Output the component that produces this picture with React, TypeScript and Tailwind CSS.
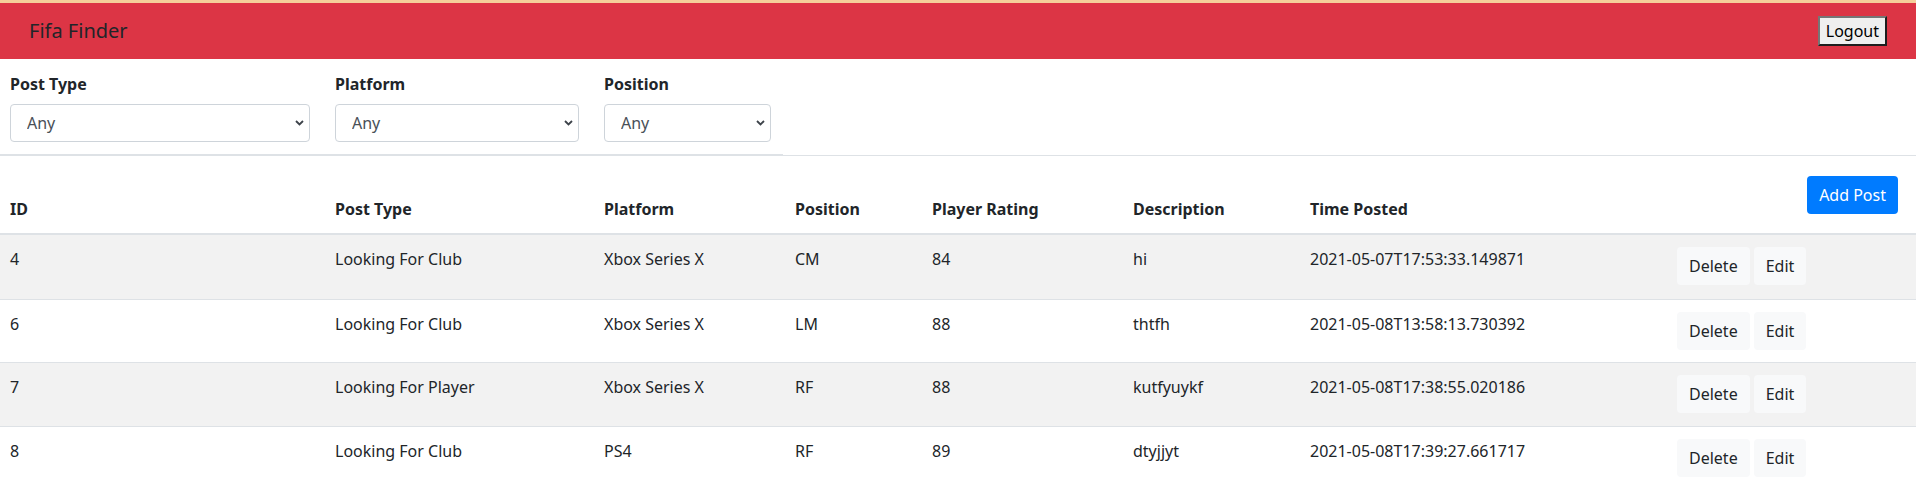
import { useState } from "react"

const posts = [
  { id: 4, type: "Looking For Club", platform: "Xbox Series X", position: "CM", rating: 84, desc: "hi", time: "2021-05-07T17:53:33.149871" },
  { id: 6, type: "Looking For Club", platform: "Xbox Series X", position: "LM", rating: 88, desc: "thtfh", time: "2021-05-08T13:58:13.730392" },
  { id: 7, type: "Looking For Player", platform: "Xbox Series X", position: "RF", rating: 88, desc: "kutfyuykf", time: "2021-05-08T17:38:55.020186" },
  { id: 8, type: "Looking For Club", platform: "PS4", position: "RF", rating: 89, desc: "dtyjjyt", time: "2021-05-08T17:39:27.661717" },
]

const cols = "grid grid-cols-[325px_269px_191px_137px_201px_177px_367px_1fr]"

function Filter({ label, width }: { label: string; width: string }) {
  const [value, setValue] = useState("Any")
  return (
    <div className="flex flex-col">
      <label className="font-bold leading-6 mb-2">{label}</label>
      <div className={`relative ${width}`}>
        <select
          value={value}
          onChange={(e) => setValue(e.target.value)}
          className="appearance-none w-full h-[38px] border border-[#ced4da] rounded-[4px] bg-white pl-4 text-[#495057] outline-none"
        >
          <option>Any</option>
        </select>
        <svg className="absolute right-[6px] top-[16px] pointer-events-none" width="9" height="6" viewBox="0 0 9 6">
          <path d="M1 1l3.5 3.5L8 1" stroke="#3d434a" strokeWidth="1.8" fill="none" />
        </svg>
      </div>
    </div>
  )
}

export default function App() {
  return (
    <div className="w-[1916px] bg-white text-[#212529] text-base" style={{ fontFamily: '"Noto Sans", sans-serif' }}>
      <div className="flex flex-row justify-between items-center h-[59px] bg-[#dc3545] border-t-[3px] border-[#f5cf9a] px-[29px]">
        <strong className="text-[20px] font-normal">Fifa Finder</strong>
        <button className="h-[30px] px-[6px] bg-[#efefef] text-black border-2 border-t-[#767676] border-l-[#767676] border-b-[#1e1e1e] border-r-[#1e1e1e]">Logout</button>
      </div>

      <div className="border-b border-[#dee2e6]">
        <div className="w-[783px] flex flex-row gap-[25px] pl-[10px] pt-[13px] pb-[12px] border-b-2 border-[#dee2e6] -mb-px">
          <Filter label="Post Type" width="w-[300px]" />
          <Filter label="Platform" width="w-[244px]" />
          <Filter label="Position" width="w-[167px]" />
        </div>
      </div>

      <div className={`${cols} h-[79px] border-b-2 border-[#dee2e6] font-bold`}>
        {["ID", "Post Type", "Platform", "Position", "Player Rating", "Description", "Time Posted"].map((h) => (
          <div key={h} className="flex items-end pl-[10px] pb-3 leading-6">{h}</div>
        ))}
        <div className="flex items-end justify-end pr-[18px] pb-[19px]">
          <button className="h-[38px] px-3 rounded-[4px] bg-[#007bff] text-white font-normal">Add Post</button>
        </div>
      </div>

      {posts.map((p, i) => (
        <div key={p.id} className={`${cols} h-[63.5px] ${i > 0 ? "border-t border-[#dee2e6]" : ""} ${i % 2 === 0 ? "bg-[#f2f2f2]" : "bg-white"}`}>
          {[p.id, p.type, p.platform, p.position, p.rating, p.desc, p.time].map((v, j) => (
            <div key={j} className="pl-[10px] pt-3 leading-6">{v}</div>
          ))}
          <div className="flex flex-row gap-1 pl-[10px] pt-3">
            <button className="h-[38px] px-3 rounded-[4px] bg-[#f8f9fa]">Delete</button>
            <button className="h-[38px] px-3 rounded-[4px] bg-[#f8f9fa]">Edit</button>
          </div>
        </div>
      ))}
    </div>
  )
}
